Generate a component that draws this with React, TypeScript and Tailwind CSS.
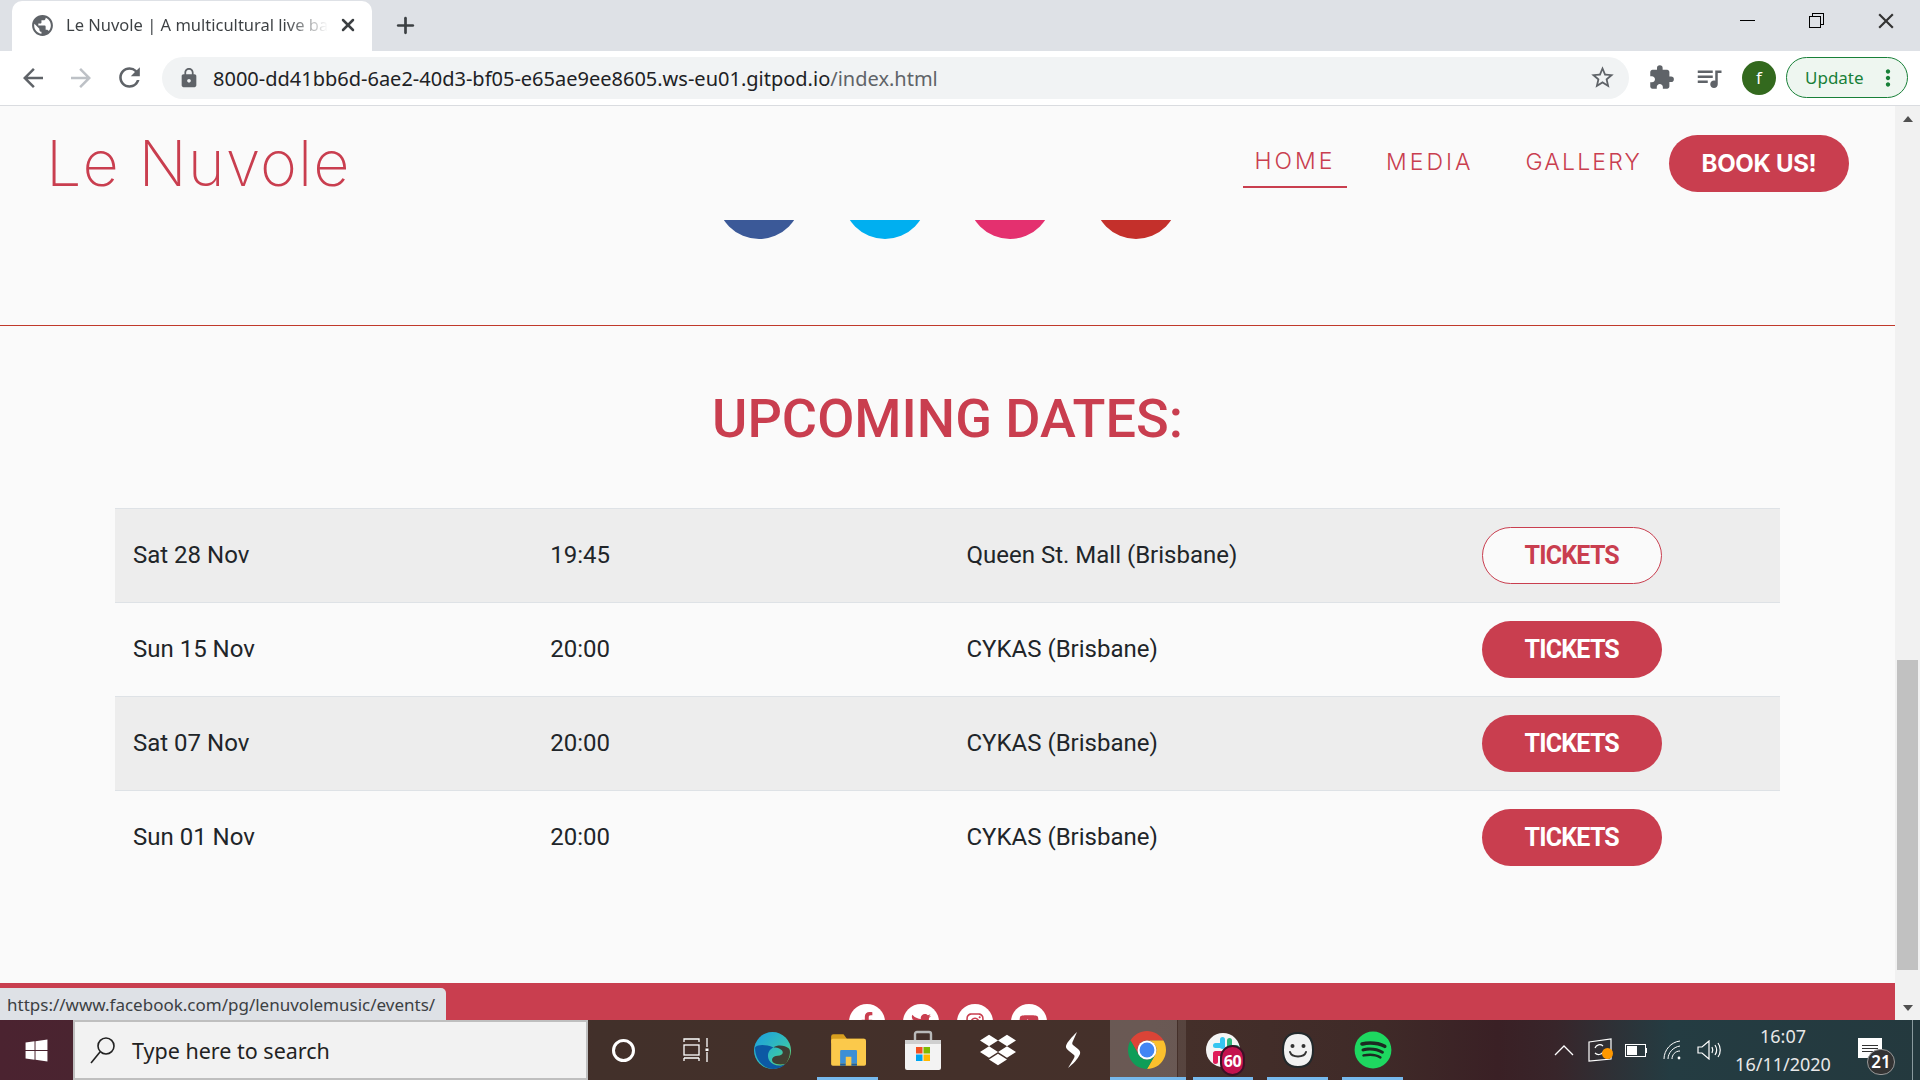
import { Plus, X } from 'lucide-react'
import { FaDropbox, FaFacebookF, FaInstagram, FaSpotify, FaTwitter, FaWindows, FaYoutube } from 'react-icons/fa'
import {
  MdArrowBack,
  MdArrowForward,
  MdClose,
  MdExtension,
  MdLock,
  MdMoreVert,
  MdPublic,
  MdQueueMusic,
  MdRefresh,
  MdStarBorder,
} from 'react-icons/md'

const dates = [
  { day: 'Sat 28 Nov', time: '19:45', place: 'Queen St. Mall (Brisbane)', striped: true, outline: true },
  { day: 'Sun 15 Nov', time: '20:00', place: 'CYKAS (Brisbane)', striped: false, outline: false },
  { day: 'Sat 07 Nov', time: '20:00', place: 'CYKAS (Brisbane)', striped: true, outline: false },
  { day: 'Sun 01 Nov', time: '20:00', place: 'CYKAS (Brisbane)', striped: false, outline: false },
]

function ChromeLogo() {
  return (
    <svg viewBox="0 0 24 24" className="h-[38px] w-[38px]">
      <path d="M1.61 6A12 12 0 0 1 22.39 6H12A6 6 0 0 0 6.8 15Z" fill="#db4437" />
      <path d="M22.39 6A12 12 0 0 1 12 24L17.2 15A6 6 0 0 0 12 6Z" fill="#fbc02d" />
      <path d="M12 24A12 12 0 0 1 1.61 6L6.8 15A6 6 0 0 0 17.2 15Z" fill="#0f9d58" />
      <circle cx="12" cy="12" r="6" fill="#fff" />
      <circle cx="12" cy="12" r="4.7" fill="#4285f4" />
    </svg>
  )
}

function EdgeLogo() {
  return (
    <svg viewBox="0 0 36 36" className="h-[37px] w-[37px]">
      <defs>
        <linearGradient id="edgeTop" x1="0" y1="0" x2="1" y2="1">
          <stop offset="0" stopColor="#1b9de2" />
          <stop offset="0.6" stopColor="#35c1b3" />
          <stop offset="1" stopColor="#7fe04f" />
        </linearGradient>
      </defs>
      <circle cx="18" cy="18" r="18" fill="url(#edgeTop)" />
      <path d="M1 15C1 27 9 36 19 36c5 0 9-2 12-5-5 3-13 2-16-3-3-5-1-11 4-13-8-3-15-3-18 0Z" fill="#0c59a4" />
      <path d="M19 15c5 0 9 2 9 5 0 2-2 3-5 3-5 0-7 4-4 7 3 2 8 2 12 1 2-3 4-7 4-11 0-1 0-3-1-4-4-3-11-4-15-1Z" fill="#3f3028" opacity="0.9" />
    </svg>
  )
}

function ExplorerIcon() {
  return (
    <svg viewBox="0 0 32 32" className="h-[36px] w-[36px]">
      <path d="M1 4a2 2 0 0 1 2-2h9l3 4h15a1 1 0 0 1 1 1v3H1Z" fill="#d89f1f" />
      <rect x="1" y="6" width="31" height="24" rx="1.5" fill="#fbc94b" />
      <path d="M9 28V17a1 1 0 0 1 1-1h13a1 1 0 0 1 1 1v11h-5v-6h-5v6Z" fill="#3d8fd6" />
      <rect x="9" y="28" width="5" height="2" fill="#1f5f9e" />
      <rect x="19" y="28" width="5" height="2" fill="#1f5f9e" />
    </svg>
  )
}

function StoreIcon() {
  return (
    <svg viewBox="0 0 36 40" className="h-[40px] w-[36px]">
      <path d="M10 12V4a2 2 0 0 1 2-2h12a2 2 0 0 1 2 2v8" fill="none" stroke="#b9b9b9" strokeWidth="2.4" />
      <path d="M0 10h36v28a2 2 0 0 1-2 2H2a2 2 0 0 1-2-2Z" fill="#f3f3f3" />
      <rect y="10" width="36" height="4" fill="#cfcfcf" />
      <rect x="11" y="17" width="6.5" height="6.5" fill="#f25022" />
      <rect x="18.5" y="17" width="6.5" height="6.5" fill="#7fba00" />
      <rect x="11" y="24.5" width="6.5" height="6.5" fill="#00a4ef" />
      <rect x="18.5" y="24.5" width="6.5" height="6.5" fill="#ffb900" />
    </svg>
  )
}

function StreamIcon() {
  return (
    <svg viewBox="0 0 18 36" className="h-[38px] w-[18px]">
      <path d="M13 0C8 5 3 10 2 14c-.5 2 1 3 3 5l5 4c1 1 .5 2-.5 4L4 36c5-4 10-9 12-14 .5-2 0-3-2-5l-5-4c-1-1-1-2 0-4Z" fill="#fff" />
    </svg>
  )
}

function SlackIcon() {
  return (
    <div className="relative flex h-[40px] w-[34px] items-center justify-center">
      <svg viewBox="0 0 34 40" className="h-[40px] w-[34px]">
        <circle cx="17" cy="20" r="17" fill="#f5f5f5" />
        <rect x="14" y="7" width="5" height="12" rx="2.5" fill="#36c5f0" />
        <rect x="7" y="13" width="12" height="5" rx="2.5" fill="#36c5f0" />
        <rect x="21" y="8" width="5" height="12" rx="2.5" fill="#2eb67d" />
        <rect x="21" y="15" width="12" height="5" rx="2.5" fill="#2eb67d" />
        <rect x="7" y="21" width="12" height="5" rx="2.5" fill="#e01e5a" />
        <rect x="7" y="22" width="5" height="12" rx="2.5" fill="#e01e5a" />
      </svg>
      <span className="absolute top-[15px] left-[14px] flex h-[31px] w-[25px] items-center justify-center rounded-full border-2 border-[#3b1226] bg-[#c4124e] font-['Open_Sans',sans-serif] text-[16px] font-bold tracking-[-0.5px] text-white">
        60
      </span>
    </div>
  )
}

function SmileIcon() {
  return (
    <svg viewBox="0 0 32 36" className="h-[36px] w-[32px]">
      <path d="M16 1C26 1 31 6 31 18S26 35 16 35 1 30 1 18 6 1 16 1Z" fill="#f2f2f2" stroke="#23292c" strokeWidth="2" />
      <circle cx="10.5" cy="14" r="2" fill="#333" />
      <circle cx="21.5" cy="14" r="2" fill="#333" />
      <path d="M8 20c2 6 14 6 16 0" fill="none" stroke="#333" strokeWidth="2" strokeLinecap="round" />
    </svg>
  )
}

function TaskSlot({ width, active, wide, children }: { width: string; active?: boolean; wide?: boolean; children: React.ReactNode }) {
  return (
    <div className={`relative flex h-full shrink-0 items-center justify-center ${width}`}>
      {children}
      {active && (
        <span className={`absolute bottom-0 h-[3px] bg-[#76b9ed] ${wide ? 'left-0 right-0' : 'left-[7px] right-[7px]'}`} />
      )}
    </div>
  )
}

function BrowserChrome() {
  return (
    <>
      <div className="flex h-[51px] shrink-0 items-end bg-[#dee1e6] font-['Noto_Sans',sans-serif]">
        <div className="ml-3 flex h-[50px] w-[360px] items-center rounded-t-[10px] bg-white pr-[14px] pb-[2px] pl-[18px]">
          <MdPublic className="h-[25px] w-[25px] shrink-0 text-[#5f6368]" />
          <span className="ml-[11px] w-[262px] bg-[linear-gradient(90deg,#3c4043_84%,#ffffff_100%)] bg-clip-text text-[16.5px] whitespace-nowrap text-transparent">
            Le Nuvole | A multicultural live ba
          </span>
          <X className="ml-auto h-[20px] w-[20px] shrink-0 text-[#3c4043]" strokeWidth={3} />
        </div>
        <div className="flex h-[50px] w-[66px] items-center justify-center pb-[2px]">
          <Plus className="h-[25px] w-[25px] text-[#3c4043]" strokeWidth={2.6} />
        </div>
        <div className="ml-auto flex h-full items-center pb-[10px] text-[#222]">
          <div className="flex w-[69px] justify-center">
            <span className="h-px w-[15px] bg-black" />
          </div>
          <div className="flex w-[69px] justify-center">
            <span className="relative h-[15px] w-[15px]">
              <span className="absolute top-0 right-0 h-[12px] w-[12px] border border-black" />
              <span className="absolute bottom-0 left-0 h-[12px] w-[12px] border border-black bg-[#dee1e6]" />
            </span>
          </div>
          <div className="flex w-[69px] justify-center">
            <MdClose className="h-[26px] w-[26px] text-[#333]" />
          </div>
        </div>
      </div>
      <div className="flex h-[55px] shrink-0 items-center border-b border-[#dadce0] bg-white pb-px font-['Noto_Sans',sans-serif]">
        <div className="flex w-[162px] items-center pl-[18px]">
          <MdArrowBack className="h-[30px] w-[30px] text-[#5f6368]" />
          <MdArrowForward className="ml-[18px] h-[30px] w-[30px] text-[#bdc1c6]" />
          <MdRefresh className="ml-[18px] h-[31px] w-[31px] text-[#5f6368]" />
        </div>
        <div className="flex h-[42px] w-[1467px] items-center rounded-full bg-[#f1f3f4] pl-[16px]">
          <MdLock className="h-[22px] w-[22px] text-[#5f6368]" />
          <span className="ml-[13px] pt-[2px] text-[20px] whitespace-nowrap text-[#202124]">
            8000-dd41bb6d-6ae2-40d3-bf05-e65ae9ee8605.ws-eu01.gitpod.io<span className="text-[#5f6368]">/index.html</span>
          </span>
          <MdStarBorder className="mr-[13px] ml-auto h-[27px] w-[27px] text-[#5f6368]" />
        </div>
        <MdExtension className="ml-[19px] h-[27px] w-[27px] text-[#5f6368]" />
        <MdQueueMusic className="ml-[19px] h-[30px] w-[30px] text-[#5f6368]" />
        <span className="ml-[18px] flex h-[34px] w-[34px] items-center justify-center rounded-full bg-[#33691e] text-[17px] text-white">f</span>
        <div className="ml-[10px] flex h-[41px] w-[122px] items-center rounded-full border border-[#188038] bg-[#eef6f0] pl-[18px] text-[17px] text-[#188038]">
          Update
          <MdMoreVert className="ml-[11px] h-[26px] w-[26px]" />
        </div>
      </div>
    </>
  )
}

function Page() {
  return (
    <div className="flex min-w-0 flex-1 flex-col bg-[#fafafa] font-['Roboto',sans-serif]">
      <header className="flex h-[114px] shrink-0 items-start pr-[46px] pl-[46px]">
        <span className="mt-[15px] font-['Inter',sans-serif] text-[63px] leading-[84px] font-extralight tracking-[1px] text-[#c93e4f]">
          Le Nuvole
        </span>
        <nav className="mt-[29px] ml-auto flex items-start font-['Inter',sans-serif] text-[23px] font-light tracking-[3px] text-[#c93e4f]">
          <a className="flex h-[53px] w-[104px] items-center justify-center border-b-2 border-[#c93e4f] pt-px">HOME</a>
          <a className="ml-[39px] flex h-[53px] items-center pt-px">MEDIA</a>
          <a className="ml-[52px] flex h-[53px] items-center pt-px tracking-[2.2px]">GALLERY</a>
          <a className="ml-[27px] flex h-[57px] w-[180px] items-center justify-center rounded-full bg-[#c93e4f] text-[24px] font-bold tracking-[-0.3px] text-white">
            BOOK US!
          </a>
        </nav>
      </header>

      <section className="flex h-[106px] shrink-0 justify-center gap-[41.5px] overflow-hidden border-b border-[#c0392b]">
        <span className="mt-[-65px] h-[84px] w-[84px] rounded-full bg-[#3b5998]" />
        <span className="mt-[-65px] h-[84px] w-[84px] rounded-full bg-[#00aff0]" />
        <span className="mt-[-65px] h-[84px] w-[84px] rounded-full bg-[#e4306f]" />
        <span className="mt-[-65px] h-[84px] w-[84px] rounded-full bg-[#c4302b]" />
      </section>

      <h2 className="flex h-[182px] shrink-0 items-center justify-center pt-[3px] text-[54px] font-medium text-[#c93e4f]">
        UPCOMING DATES:
      </h2>

      <div className="mx-auto w-[1665px] shrink-0 text-[24px] text-[#212529]">
        {dates.map((d) => (
          <div key={d.day} className={`grid h-[94px] grid-cols-4 items-center border-t border-[#dee2e6] ${d.striped ? 'bg-[#ededed]' : ''}`}>
            <span className="pb-[2px] pl-[18px]">{d.day}</span>
            <span className="pb-[2px] pl-[19px]">{d.time}</span>
            <span className="pb-[2px] pl-[19px]">{d.place}</span>
            <span className="flex pl-[118px]">
              <a
                className={`flex h-[57px] w-[180px] items-center justify-center rounded-full text-[25px] font-bold tracking-[-0.8px] ${
                  d.outline ? 'border border-[#c93e4f] bg-[#fafafa] text-[#c93e4f]' : 'bg-[#c93e4f] text-white'
                }`}
              >
                TICKETS
              </a>
            </span>
          </div>
        ))}
      </div>

      <footer className="mt-[99px] flex min-h-0 flex-1 justify-center gap-[18px] overflow-hidden bg-[#c93e4f] pt-[21px]">
        {[FaFacebookF, FaTwitter, FaInstagram, FaYoutube].map((Icon, i) => (
          <span key={i} className="flex h-[36px] w-[36px] shrink-0 items-center justify-center rounded-full bg-white text-[#c93e4f]">
            <Icon className="h-[20px] w-[20px]" />
          </span>
        ))}
      </footer>
    </div>
  )
}

function Scrollbar() {
  return (
    <div className="flex w-[25px] shrink-0 flex-col items-center bg-[#f1f1f1]">
      <div className="flex h-[25px] shrink-0 items-center justify-center">
        <span className="h-0 w-0 border-x-[5px] border-b-[6px] border-x-transparent border-b-[#505050]" />
      </div>
      <div className="mt-[529px] h-[310px] w-[21px] shrink-0 bg-[#c1c1c1]" />
      <div className="mt-auto flex h-[25px] shrink-0 items-center justify-center">
        <span className="h-0 w-0 border-x-[5px] border-t-[6px] border-x-transparent border-t-[#505050]" />
      </div>
    </div>
  )
}

function Taskbar() {
  return (
    <div className="flex h-[60px] shrink-0 items-center bg-[linear-gradient(90deg,#4b2330_0%,#4a2430_4%,#42302a_31%,#45302a_60%,#3f2a28_72%,#3a2025_78%,#38252a_81%,#243c42_87%,#24393e_100%)] font-['Noto_Sans',sans-serif]">
      <div className="flex w-[73px] shrink-0 justify-center">
        <FaWindows className="h-[25px] w-[25px] text-white" />
      </div>
      <div className="flex h-full w-[515px] shrink-0 items-center border-2 border-[#bfbfbf] bg-[#f2f2f2] pl-[15px] text-[21.5px] text-[#222]">
        <svg viewBox="0 0 26 28" className="h-[28px] w-[26px]" fill="none" stroke="#222" strokeWidth="1.6">
          <circle cx="16" cy="10" r="8" />
          <path d="M10 16 1 27" />
        </svg>
        <span className="ml-[16px] pt-[3px]">Type here to search</span>
      </div>

      <TaskSlot width="w-[70px]">
        <span className="h-[23px] w-[23px] rounded-full border-[3px] border-white" />
      </TaskSlot>
      <TaskSlot width="w-[76px]">
        <svg viewBox="0 0 26 24" className="h-[24px] w-[26px]" fill="none" stroke="#fff" strokeWidth="1.3">
          <path d="M1 4V1h15v3M1 20v3M16 20v3M1 20h15" />
          <rect x="1" y="7" width="15" height="10" />
          <path d="M24 0v9M24 14v10" />
          <rect x="22.5" y="10.5" width="3" height="2.5" fill="#fff" stroke="none" />
        </svg>
      </TaskSlot>
      <TaskSlot width="w-[76px]">
        <EdgeLogo />
      </TaskSlot>
      <TaskSlot width="w-[75px]" active>
        <ExplorerIcon />
      </TaskSlot>
      <TaskSlot width="w-[75px]">
        <StoreIcon />
      </TaskSlot>
      <TaskSlot width="w-[75px]">
        <FaDropbox className="h-[36px] w-[36px] text-white" />
      </TaskSlot>
      <TaskSlot width="w-[75px]">
        <StreamIcon />
      </TaskSlot>
      <TaskSlot width="w-[76px]" active wide>
        <span className="absolute inset-y-0 left-0 w-[67px] bg-white/20" />
        <span className="absolute inset-y-0 right-0 w-[8px] bg-white/10" />
        <span className="relative mr-[2px]">
          <ChromeLogo />
        </span>
      </TaskSlot>
      <TaskSlot width="w-[74px]" active>
        <SlackIcon />
      </TaskSlot>
      <TaskSlot width="w-[75px]" active>
        <SmileIcon />
      </TaskSlot>
      <TaskSlot width="w-[75px]" active>
        <span className="relative flex h-[36px] w-[36px] items-center justify-center rounded-full bg-[#1b2b22]">
          <FaSpotify className="h-[38px] w-[38px] shrink-0 text-[#1ed760]" />
        </span>
      </TaskSlot>

      <div className="ml-auto flex h-full items-center text-white">
        <div className="flex w-[36px] justify-center">
          <svg viewBox="0 0 20 12" className="h-[12px] w-[20px]" fill="none" stroke="#fff" strokeWidth="1.3">
            <path d="M1 11 10 2l9 9" />
          </svg>
        </div>
        <div className="relative flex w-[36px] justify-center">
          <svg viewBox="0 0 24 24" className="h-[24px] w-[24px]" fill="none" stroke="#fff" strokeWidth="1.2">
            <path d="M1 4 23 1v20l-22 2Z" />
            <path d="M7 10a5 5 0 0 1 8-2M15 14a5 5 0 0 1-8 1" />
          </svg>
          <span className="absolute top-[10px] left-[20px] h-[11px] w-[11px] rounded-full bg-[#ff9800]" />
        </div>
        <div className="flex w-[36px] justify-center">
          <span className="flex h-[13px] w-[21px] items-center border border-white p-px">
            <span className="h-full w-[10px] bg-white" />
          </span>
          <span className="mt-[4px] h-[5px] w-px bg-white" />
        </div>
        <div className="flex w-[37px] justify-center">
          <svg viewBox="0 0 20 20" className="h-[20px] w-[20px]" fill="none" stroke="#fff" strokeWidth="1">
            <path d="M1 19C1 10 8 2 17 1M5 19c0-6 5-12 12-13M9 19c0-4 3-8 8-8" />
            <circle cx="16" cy="18" r="1.4" fill="#fff" stroke="none" />
          </svg>
        </div>
        <div className="flex w-[35px] justify-center">
          <svg viewBox="0 0 24 20" className="h-[20px] w-[24px]" fill="none" stroke="#fff" strokeWidth="1.2">
            <path d="M1 7h4l7-6v18l-7-6H1Z" />
            <path d="M15 7c1 2 1 4 0 6M18 5c2 3 2 7 0 10M21 3c3 4 3 10 0 14" />
          </svg>
        </div>
        <div className="flex w-[114px] flex-col items-center text-[18px] leading-[28px] text-[#e8e8e8]">
          <span>16:07</span>
          <span>16/11/2020</span>
        </div>
        <div className="relative mt-[-4px] flex w-[72px] justify-start pl-[18px]">
          <span className="flex h-[20px] w-[24px] flex-col justify-center gap-[2px] bg-white px-[4px]">
            <span className="h-px bg-[#333]" />
            <span className="h-px bg-[#333]" />
            <span className="h-px bg-[#333]" />
          </span>
          <span className="absolute top-[11px] left-[27px] flex h-[26px] w-[28px] items-center justify-center rounded-full border border-[#999] bg-[#333] text-[17px] font-semibold text-white">
            21
          </span>
        </div>
        <div className="h-full w-[8px] border-l border-[#8a9a9e]" />
      </div>
    </div>
  )
}

export default function App() {
  return (
    <div className="flex h-screen w-full flex-col overflow-hidden">
      <BrowserChrome />
      <div className="relative flex min-h-0 flex-1">
        <Page />
        <Scrollbar />
        <div className="absolute bottom-0 left-0 flex h-[32px] w-[446px] items-center rounded-tr-[5px] bg-[#dee1e6] pt-[2px] pl-[7px] font-['Noto_Sans',sans-serif] text-[17px] text-[#3c4043]">
          https://www.facebook.com/pg/lenuvolemusic/events/
        </div>
      </div>
      <Taskbar />
    </div>
  )
}
